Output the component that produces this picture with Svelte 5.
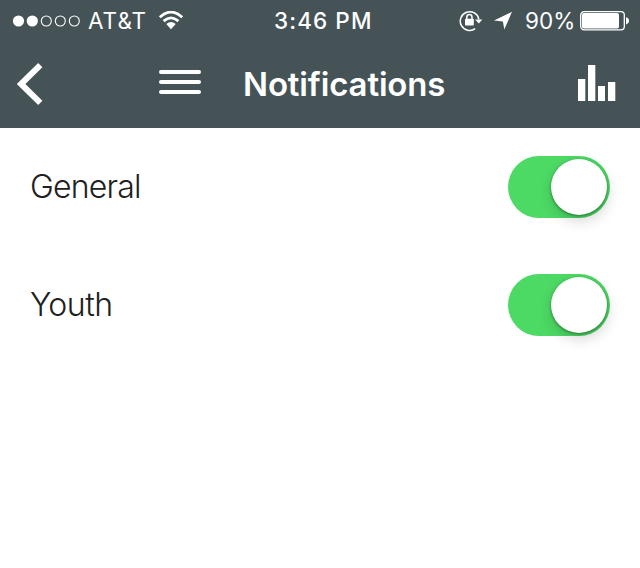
<script>
  let settings = $state([
    { name: 'General', on: true, spacing: -0.8 },
    { name: 'Youth', on: true, spacing: -0.5 },
  ]);
</script>

<div class="screen">
  <header>
    <div class="status">
      <div class="carrier">
        <svg class="signal" width="68" height="12" viewBox="0 0 68 12">
          <circle cx="6.5" cy="6" r="5.6" fill="#fff" />
          <circle cx="20.3" cy="6" r="5.6" fill="#fff" />
          <circle cx="34.3" cy="6" r="5" />
          <circle cx="48.3" cy="6" r="5" />
          <circle cx="62.3" cy="6" r="5" />
        </svg>
        <span class="network">AT&amp;T</span>
        <svg class="wifi" width="26" height="20" viewBox="0 0 26 20">
          <path d="M1.8 6.2Q13-4 24.2 6.2M5.6 10.1Q13 3.7 20.4 10.1" fill="none" stroke="#fff" stroke-width="2.8" />
          <path d="M8.3 13.1Q13 9 17.7 13.1L13 18.3Z" fill="#fff" />
        </svg>
      </div>
      <span class="time">3:46 PM</span>
      <div class="power">
        <svg class="lock" width="24" height="22" viewBox="0 0 24 22">
          <path d="M16.2 18.7A9.4 9.4 0 1 1 19.9 9.3" fill="none" stroke="#fff" stroke-width="1.5" />
          <path d="M16.2 9.4H23.3L19.8 13.6Z" fill="#fff" />
          <rect x="6" y="8.8" width="8.8" height="6.8" rx=".8" fill="#fff" />
          <path d="M7.8 9.4V7.2a2.6 2.6 0 0 1 5.2 0v2.2" fill="none" stroke="#fff" stroke-width="1.5" />
        </svg>
        <svg class="arrow" width="18" height="19" viewBox="0 0 18 19">
          <path d="M18 .8L10.3 18.6L8.9 10.6L0 9.6Z" fill="#fff" />
        </svg>
        <span class="percent">90%</span>
        <svg class="battery" width="49" height="20" viewBox="0 0 49 20">
          <rect x=".7" y=".7" width="43.6" height="18.2" rx="3.4" fill="none" stroke="#fff" stroke-width="1.3" />
          <rect x="2" y="2" width="37" height="15.6" rx="1.8" fill="#fff" />
          <path d="M46 6.2q3 .8 3 3.6t-3 3.6Z" fill="#fff" />
        </svg>
      </div>
    </div>
    <nav>
      <button class="back" aria-label="Back">
        <svg width="26" height="42" viewBox="0 0 26 42">
          <path d="M23.3 2.2L4 21L23.3 39.8" fill="none" stroke="#fff" stroke-width="6" />
        </svg>
      </button>
      <button class="menu" aria-label="Menu"><i></i><i></i><i></i></button>
      <h1>Notifications</h1>
      <button class="chart" aria-label="Statistics">
        <svg width="38" height="37" viewBox="0 0 38 37">
          <path d="M0 14H7.3V36H0ZM10 0H17.3V36H10ZM20 21H27V36H20ZM30 17H37.3V36H30Z" fill="#fff" />
        </svg>
      </button>
    </nav>
  </header>
  <main>
    {#each settings as item}
      <div class="row">
        <span class="label" style="letter-spacing: {item.spacing}px">{item.name}</span>
        <button class="switch" class:on={item.on} role="switch" aria-checked={item.on} aria-label={item.name} onclick={() => (item.on = !item.on)}>
          <span class="knob"></span>
        </button>
      </div>
    {/each}
  </main>
</div>

<style>
  :global(body) { margin: 0; background: #fff; }
  .screen {
    width: 640px;
    height: 568px;
    overflow: hidden;
    background: #fff;
    font-family: Inter, "Liberation Sans", sans-serif;
  }
  svg { display: block; flex: none; }
  button { border: 0; padding: 0; background: none; flex: none; }
  header {
    box-sizing: border-box;
    height: 128px;
    background: #455357;
    color: #fff;
  }
  .status {
    height: 40px;
    display: flex;
    align-items: center;
    justify-content: space-between;
    box-sizing: border-box;
    padding: 1px 12px 0 12px;
    font-size: 22.5px;
    line-height: 28px;
    white-space: nowrap;
  }
  .carrier, .power { display: flex; align-items: center; }
  .carrier { width: 262px; }
  .signal circle { stroke: #fff; stroke-width: 1.1; }
  .signal circle[fill] { stroke: none; }
  .signal circle:not([fill]) { fill: none; }
  .network { width: 61px; margin-left: 8px; letter-spacing: 1px; }
  .wifi { margin-left: 9px; }
  .time { flex: 1; font-weight: 500; letter-spacing: 1.1px; }
  .lock { margin-right: 11px; }
  .arrow { margin-right: 13px; }
  .percent { width: 50px; margin-right: 5px; }
  .power { margin-right: -1px; }
  nav {
    height: 88px;
    display: flex;
    align-items: center;
    box-sizing: border-box;
    padding: 0 24px 0 17px;
  }
  .menu {
    width: 42px;
    display: flex;
    flex-direction: column;
    gap: 6px;
    margin: 0 42px 4px 116px;
  }
  .menu i { height: 4px; border-radius: 2px; background: #fff; }
  .chart { margin-bottom: 2px; }
  h1 {
    flex: 1;
    margin: 0;
    font-size: 33px;
    line-height: 44px;
    font-weight: 600;
    letter-spacing: -.15px;
    white-space: nowrap;
  }
  .row {
    height: 118px;
    display: flex;
    align-items: center;
    justify-content: space-between;
    padding: 0 30px;
  }
  .label { font-size: 32px; line-height: 40px; font-weight: 300; color: #202020; }
  .switch {
    width: 102px;
    height: 62px;
    box-sizing: border-box;
    padding: 3px;
    border-radius: 31px;
    background: #ddd;
    display: flex;
  }
  .switch.on { background: #4cd964; justify-content: flex-end; }
  .knob {
    width: 56px;
    height: 56px;
    border-radius: 50%;
    background: #fff;
    box-shadow: 0 1px 3px rgba(0, 0, 0, .4), 1px 6px 14px rgba(0, 0, 0, .16);
  }
</style>
